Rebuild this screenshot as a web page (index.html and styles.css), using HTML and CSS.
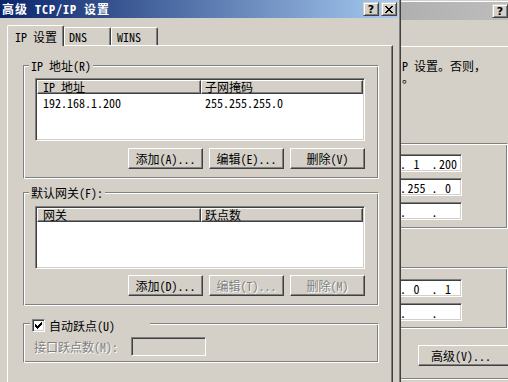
FILE: index.html
```html
<!DOCTYPE html>
<html lang="zh-CN">
<head>
<meta charset="utf-8">
<title>高级 TCP/IP 设置</title>
<link rel="stylesheet" href="styles.css">
</head>
<body>
<div class="screen">
  <div class="dlg">
    <div class="titlebar">
      <span class="title">高级 TCP/IP 设置</span>
      <span class="capbtns">
        <span class="capbtn">?</span>
        <span class="capbtn"><svg width="8" height="7" viewBox="0 0 8 7"><path d="M0 0h2v1h-2zM6 0h2v1h-2zM1 1h2v1h-2zM5 1h2v1h-2zM2 2h4v1h-4zM3 3h2v1h-2zM2 4h4v1h-4zM1 5h2v1h-2zM5 5h2v1h-2zM0 6h2v1h-2zM6 6h2v1h-2z" fill="#000"/></svg></span>
      </span>
    </div>
    <div class="tabs">
      <div class="tab sel t1">IP 设置</div>
      <div class="tab t2">DNS</div>
      <div class="tab t3">WINS</div>
    </div>
    <div class="panel">
      <div class="group g1">
        <div class="gtitle">IP 地址(R)</div>
        <div class="list">
          <div class="lhead"><div class="col c1">IP 地址</div><div class="col c2">子网掩码</div></div>
          <div class="lrow"><div class="cell c1">192.168.1.200</div><div class="cell c2">255.255.255.0</div></div>
        </div>
        <div class="btnrow">
          <button class="btn">添加(A)...</button>
          <button class="btn">编辑(E)...</button>
          <button class="btn">删除(V)</button>
        </div>
      </div>
      <div class="group g2">
        <div class="gtitle">默认网关(F):</div>
        <div class="list">
          <div class="lhead"><div class="col c1">网关</div><div class="col c2">跃点数</div></div>
        </div>
        <div class="btnrow">
          <button class="btn">添加(D)...</button>
          <button class="btn dis">编辑(T)...</button>
          <button class="btn dis">删除(M)</button>
        </div>
      </div>
      <div class="group g3">
        <div class="cbtitle">
          <span class="cb"><svg width="7" height="7" viewBox="0 0 7 7"><path d="M6 0h1v1h-1zM5 1h2v1h-2zM0 2h1v1h-1zM4 2h3v1h-3zM0 3h2v1h-2zM3 3h3v1h-3zM0 4h5v1h-5zM1 5h3v1h-3zM2 6h1v1h-1z" fill="#000"/></svg></span>
          <span class="cblabel">自动跃点(U)</span>
        </div>
        <div class="metric">
          <span class="mlabel distext">接口跃点数(M):</span>
          <span class="tbox"></span>
        </div>
      </div>
    </div>
  </div>
  <div class="bgwin">
    <div class="bgedge"></div>
    <div class="bgtitle"><span class="capbtn">?</span></div>
    <div class="bgpanel">
      <div class="bgtext">P 设置。否则，<br>。</div>
      <div class="bggroup ga">
        <div class="ipbox"><span class="f d">.</span><span class="f f3">1</span><span class="f d2">.</span><span class="f f4">200</span></div>
        <div class="ipbox"><span class="f d">.</span><span class="f f3">255</span><span class="f d2">.</span><span class="f f4">0</span></div>
        <div class="ipbox"><span class="f d">.</span><span class="f f3"></span><span class="f d2">.</span><span class="f f4"></span></div>
      </div>
      <div class="bggroup gb">
        <div class="ipbox"><span class="f d">.</span><span class="f f3">0</span><span class="f d2">.</span><span class="f f4">1</span></div>
        <div class="ipbox"><span class="f d">.</span><span class="f f3"></span><span class="f d2">.</span><span class="f f4"></span></div>
      </div>
      <button class="btn advbtn">高级(V)...</button>
      <div class="bgline"></div>
    </div>
  </div>
</div>
</body>
</html>
```
FILE: styles.css
```css
* { box-sizing: border-box; }
html, body { margin: 0; padding: 0; }
body {
  background: #d4d0c8;
  font-family: "Noto Sans Mono CJK SC", "Noto Sans CJK SC", sans-serif;
  font-size: 12px;
  color: #000;
}
.screen {
  display: flex;
  width: 508px;
  height: 382px;
  overflow: hidden;
}
.dlg {
  flex: none;
  width: 401px;
  height: 382px;
  border-right: 1px solid #404040;
  box-shadow: inset -1px 0 #808080;
  padding-right: 2px;
  background: #d4d0c8;
  display: flex;
  flex-direction: column;
}
.titlebar {
  flex: none;
  height: 18px;
  display: flex;
  align-items: center;
  padding-left: 2px;
  background: linear-gradient(to right, #0a246a, #a6caf0);
}
.title {
  flex: 1;
  color: #fff;
  font-weight: bold;
  letter-spacing: 1px;
  line-height: 18px;
  white-space: nowrap;
}
.capbtns { display: flex; gap: 2px; margin-right: 1px; }
.capbtn {
  width: 16px;
  height: 14px;
  border: 1px solid;
  border-color: #d4d0c8 #404040 #404040 #d4d0c8;
  box-shadow: inset 1px 1px #fff, inset -1px -1px #808080;
  background: #d4d0c8;
  display: flex;
  align-items: center;
  justify-content: center;
  font-family: "DejaVu Sans", sans-serif;
  font-weight: bold;
  font-size: 11px;
  line-height: 1;
  color: #000;
}
.tabs {
  flex: none;
  display: flex;
  align-items: flex-end;
  height: 20px;
  margin-top: 7px;
  padding-left: 7px;
}
.tab {
  height: 18px;
  border-top: 1px solid #fff;
  border-left: 1px solid #fff;
  border-right: 1px solid #404040;
  box-shadow: inset -1px 0 #808080;
  border-radius: 2px 2px 0 0;
  line-height: 17px;
  white-space: nowrap;
  background: #d4d0c8;
}
.tab.sel {
  height: 21px;
  margin-bottom: -1px;
  position: relative;
  z-index: 1;
  padding-top: 1px;
  line-height: 19px;
}
.t1 { width: 57px; padding-left: 7px; }
.t2 { width: 47px; padding-left: 4px; }
.t3 { width: 47px; padding-left: 5px; }
.panel {
  flex: 1;
  width: 386px;
  margin-left: 7px;
  border-top: 1px solid #fff;
  border-left: 1px solid #fff;
  border-right: 1px solid #404040;
  box-shadow: inset -1px 0 #808080;
  padding: 19px 0 0 15px;
}
.group {
  width: 356px;
  border: 1px solid;
  border-color: #808080 #fff #fff #808080;
  box-shadow: inset 1px 1px #fff, inset -1px -1px #808080;
  padding: 0 0 9px 11px;
}
.g2 { margin-top: 13px; }
.g3 { margin-top: 17px; padding: 0 0 6px 8px; }
.gtitle {
  width: fit-content;
  height: 13px;
  margin: -7px 0 0 -6px;
  padding: 0 2px;
  background: #d4d0c8;
  line-height: 13px;
  white-space: nowrap;
}
.list {
  width: 330px;
  height: 63px;
  margin-top: 6px;
  padding: 1px;
  border: 1px solid;
  border-color: #808080 #fff #fff #808080;
  box-shadow: inset 1px 1px #404040, inset -1px -1px #d4d0c8;
  background: #fff;
}
.g2 .list { margin-top: 7px; }
.lhead { display: flex; height: 14px; }
.col {
  height: 14px;
  border-top: 1px solid #fff;
  border-left: 1px solid #fff;
  border-right: 1px solid #404040;
  border-bottom: 1px solid #404040;
  box-shadow: inset -1px -1px #808080;
  background: #d4d0c8;
  line-height: 12px;
  white-space: nowrap;
}
.c1 { width: 164px; }
.c2 { width: 162px; }
.col.c1 { padding-left: 5px; }
.col.c2 { padding-left: 3px; }
.lrow { display: flex; line-height: 18px; }
.cell { white-space: nowrap; }
.cell.c1 { padding-left: 6px; }
.cell.c2 { padding-left: 4px; }
.btnrow {
  display: flex;
  justify-content: flex-end;
  gap: 6px;
  width: 330px;
  margin-top: 7px;
}
.g2 .btnrow { margin-top: 6px; }
.btn {
  width: 75px;
  height: 21px;
  padding: 0;
  margin: 0;
  font: inherit;
  color: #000;
  background: #d4d0c8;
  border: 1px solid;
  border-color: #fff #404040 #404040 #fff;
  box-shadow: inset -1px -1px #808080;
  border-radius: 0;
  display: flex;
  align-items: center;
  justify-content: center;
  white-space: nowrap;
}
.btn.dis, .distext {
  color: #808080;
  text-shadow: 1px 1px 0 #fff;
}
.cbtitle {
  display: flex;
  align-items: center;
  gap: 4px;
  width: 120px;
  height: 13px;
  margin: -5px 0 0 -2px;
  padding-left: 2px;
  background: #d4d0c8;
  line-height: 13px;
  white-space: nowrap;
}
.cb {
  flex: none;
  width: 13px;
  height: 13px;
  padding: 2px;
  border: 1px solid;
  border-color: #808080 #fff #fff #808080;
  box-shadow: inset 1px 1px #404040, inset -1px -1px #d4d0c8;
  background: #fff;
  display: flex;
}
.cb svg { display: block; }
.metric {
  display: flex;
  align-items: center;
  height: 19px;
  margin-top: 5px;
}
.mlabel { width: 97px; margin-left: 2px; white-space: nowrap; }
.tbox {
  width: 75px;
  height: 19px;
  border: 1px solid;
  border-color: #808080 #fff #fff #808080;
  box-shadow: inset 1px 1px #404040, inset -1px -1px #d4d0c8;
  background: #d4d0c8;
}
.bgwin {
  flex: 1;
  min-width: 0;
  overflow: hidden;
  border-top: 1px solid #d4d0c8;
  background: #d4d0c8;
  display: flex;
  flex-direction: column;
}
.bgedge { flex: none; height: 1px; background: #fff; }
.bgtitle {
  flex: none;
  height: 18px;
  padding-top: 2px;
  display: flex;
  justify-content: flex-end;
  align-items: flex-start;
  background: linear-gradient(to right, #b0b0b0, #bdbdbd);
}
.bgpanel {
  flex: 1;
  margin-top: 26px;
  border-top: 1px solid #fff;
}
.bgtext {
  margin-top: 13px;
  padding-left: 1px;
  line-height: 12px;
  white-space: nowrap;
}
.bggroup {
  border-top: 1px solid #808080;
  border-right: 1px solid #fff;
  border-bottom: 1px solid #fff;
  box-shadow: inset 0 1px #fff, inset -1px -1px #808080;
}
.ga { margin-top: 59px; padding: 10px 0 8px 0; }
.gb { margin-top: 38px; padding: 11px 0 7px 0; }
.ipbox {
  width: 61px;
  height: 18px;
  border-top: 1px solid #808080;
  border-right: 1px solid #fff;
  border-bottom: 1px solid #fff;
  box-shadow: inset 0 1px #404040, inset -1px -1px #d4d0c8;
  background: #fff;
  display: flex;
  align-items: center;
  line-height: 14px;
  padding-top: 1px;
}
.ipbox + .ipbox { margin-top: 6px; }
.f { display: flex; justify-content: center; flex: none; white-space: nowrap; }
.d { width: 4px; }
.f3 { width: 23px; }
.d2 { width: 13px; }
.f4 { width: 14px; }
.advbtn {
  width: 92px;
  margin: 16px 0 0 17px;
  padding-right: 6px;
}
.bgline {
  height: 2px;
  margin-top: 12px;
  border-top: 1px solid #808080;
  border-bottom: 1px solid #fff;
}
```
